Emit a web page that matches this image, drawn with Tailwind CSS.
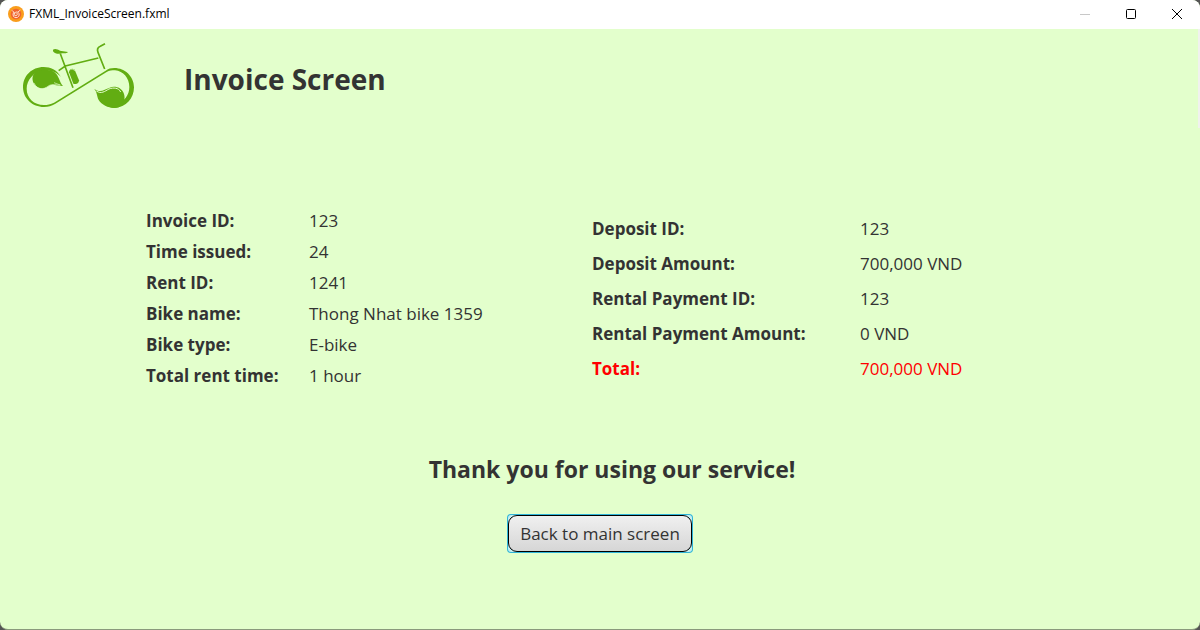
<!DOCTYPE html>
<html lang="en">
<head>
<meta charset="utf-8">
<meta name="viewport" content="width=device-width, initial-scale=1">
<title>FXML_InvoiceScreen.fxml</title>
<script src="https://cdn.jsdelivr.net/npm/@tailwindcss/browser@4"></script>
</head>
<body class="bg-[#555] font-['Open_Sans','Noto_Sans',sans-serif] text-[#333]">
<div class="flex min-h-screen flex-col overflow-hidden rounded-lg border-b border-[#8a9a7c] bg-[#e3ffcc]">
  <header class="flex h-[29px] items-center bg-white pb-[2px] pl-2 text-black">
    <svg class="size-4" viewBox="0 0 48 48" aria-hidden="true">
      <circle cx="24" cy="24" r="24" fill="#f99d1c"/>
      <circle cx="24" cy="24" r="16" fill="#f0642f"/>
      <path d="M12 13l9 9M37 12l-7 6" fill="none" stroke="#ffe3cf" stroke-width="3"/>
      <path d="M16 20c-3 9 1 15 8 15s11-6 9-12-9-7-13-2 0 9 4 8 5-4 3-7" fill="none" stroke="#ffe3cf" stroke-width="3" stroke-linecap="round"/>
    </svg>
    <span class="ml-[5px] flex-1 text-xs">FXML_InvoiceScreen.fxml</span>
    <button type="button" aria-label="Minimize" class="flex h-full w-[46px] items-center justify-center" disabled>
      <svg class="size-3" viewBox="0 0 12 12" shape-rendering="crispEdges"><path d="M1 6h10v1H1z" fill="#c8c8c8"/></svg>
    </button>
    <button type="button" aria-label="Maximize" class="flex h-full w-[46px] items-center justify-center">
      <svg class="size-3" viewBox="0 0 12 12" fill="none" stroke="#000"><rect x="1.500" y="1.500" width="9" height="9" rx="1"/></svg>
    </button>
    <button type="button" aria-label="Close" class="flex h-full w-[46px] items-center justify-center">
      <svg class="size-3" viewBox="0 0 12 12" fill="none" stroke="#000"><path d="M1 1l10 10M11 1L1 11"/></svg>
    </button>
  </header>

  <main class="flex flex-1 flex-col">
    <div class="flex h-[99px] items-start border-r-2 border-[#f0f2ee] pt-[6px] pl-[10px]">
      <svg class="h-[85px] w-[140px]" viewBox="0 0 420 255" fill="#62ad12" role="img" aria-label="Green bicycle">
        <!-- wheels and the belt between them -->
        <path d="M153 126C140 104 122 96 101 96C65 96 39 123 39 156C39 190 67 216 102 216C115 216 125 213 135 207L290 111C298 107 306 106 315 106C340 108 358 130 358 156C358 180 343 200 318 209C305 212 293 209 282 206C292 214 304 219 314 219C348 217 372 190 372 157C372 124 345 99 313 99C303 99 294 101 287 107L132 203C122 208 112 210 102 210C72 210 50 189 50 161C50 134 73 109 99 107C120 104 140 110 153 126Z"/>
        <!-- leaves -->
        <path d="M72 116C86 102 116 101 133 111C147 121 148 142 159 153C140 153 129 145 117 152C104 163 88 163 78 153C67 143 64 127 72 116Z"/>
        <path d="M252 161C270 175 283 164 299 158C314 152 334 157 341 174C348 191 341 210 326 217C304 223 277 213 266 195C260 183 262 171 252 161Z"/>
        <path d="M72 144C82 166 102 164 115 153C127 145 141 151 151 150C145 147 137 146 132 143" fill="none" stroke="#e3ffcc" stroke-width="2"/>
        <path d="M259 168C274 178 284 169 297 162C310 157 326 158 332 171" fill="none" stroke="#e3ffcc" stroke-width="3"/>
        <!-- saddle -->
        <path d="M129 44C135 40 143 43 150 47L174 51C172 55 164 55 156 55C147 58 135 57 129 49Z"/>
        <!-- frame and handlebar -->
        <g fill="none" stroke="#62ad12" stroke-width="5">
          <path d="M151 56L189 158M146 107L166 93L265 69"/>
          <path d="M284 102L264 52C260 42 264 37 271 34L285 26"/>
        </g>
        <!-- bottle -->
        <path d="M177 112C177 103 187 97 194 104L207 136C207 145 200 149 190 146Z"/>
        <path d="M182 104C187 100 192 103 194 108" fill="none" stroke="#e3ffcc" stroke-width="2"/>
      </svg>
      <h1 class="mt-[26px] ml-[34px] text-[28px] leading-9 font-bold">Invoice Screen</h1>
    </div>

    <div class="mt-[77px] flex items-start pl-[146px] text-[17px]">
      <dl class="grid w-[446px] shrink-0 grid-cols-[163px_1fr] leading-[31px]">
        <dt class="font-bold">Invoice ID:</dt><dd>123</dd>
        <dt class="font-bold">Time issued:</dt><dd>24</dd>
        <dt class="font-bold">Rent ID:</dt><dd>1241</dd>
        <dt class="font-bold">Bike name:</dt><dd>Thong Nhat bike 1359</dd>
        <dt class="font-bold">Bike type:</dt><dd>E-bike</dd>
        <dt class="font-bold">Total rent time:</dt><dd>1 hour</dd>
      </dl>
      <dl class="mt-[6px] grid flex-1 grid-cols-[268px_1fr] leading-[35px]">
        <dt class="font-bold">Deposit ID:</dt><dd>123</dd>
        <dt class="font-bold">Deposit Amount:</dt><dd>700,000 VND</dd>
        <dt class="font-bold">Rental Payment ID:</dt><dd>123</dd>
        <dt class="font-bold">Rental Payment Amount:</dt><dd>0 VND</dd>
        <dt class="font-bold text-[#f00]">Total:</dt><dd class="text-[#f00]">700,000 VND</dd>
      </dl>
    </div>

    <p class="mt-[60px] pl-6 text-center text-[23px] leading-9 font-bold">Thank you for using our service!</p>
    <div class="mt-7 flex justify-center">
      <button type="button" class="rounded-[3px] bg-[#c5eef0] text-[17px] ring-1 ring-[#2fb4d8]">
        <span class="block rounded-[9px] border border-black bg-linear-to-b from-[#f0f0f0] to-[#d6d6d6] px-[11px] py-1 leading-[27px]">Back to main screen</span>
      </button>
    </div>
  </main>
</div>
</body>
</html>
